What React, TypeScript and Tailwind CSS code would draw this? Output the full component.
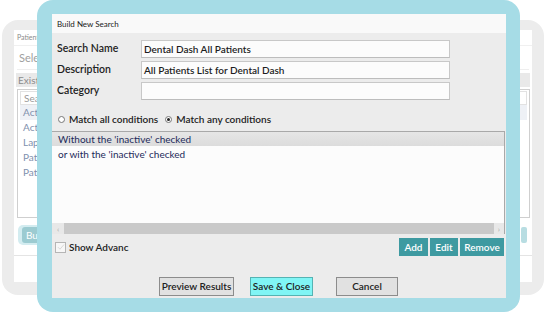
import React from "react";

const font = { fontFamily: "Lato, 'Open Sans', sans-serif" };

function BackgroundWindow() {
  return (
    <div className="pt-[20px] pl-[2px]">
      <div className="w-[542px] h-[275px] rounded-[16px] bg-[#ececec] pt-[10px] pl-[12px] pr-[12px]">
        <div className="h-[252px] bg-white flex flex-col">
          <div className="h-[16px] flex items-center pl-[3px] text-[7px] text-[#8a8a8a] border-b border-[#f0f0f0]">
            Patient Search
          </div>
          <div className="h-[22px] mt-[2px] mx-[3px] flex items-center pl-[2px] text-[11px] text-[#a0a0a0] border-b border-[#eeeeee]">
            Select a Search
          </div>
          <div className="mt-[3px] mx-[2px] h-[14px] bg-[#e9e9e9] flex items-center pl-[2px] text-[10px] text-[#8c8c8c]">
            Existing Searches
          </div>
          <div className="mt-[2px] mx-[3px] mr-[2px] h-[129px] border border-[#cfcfcf] flex flex-col px-[2px] pt-[1px]">
            <div className="h-[14px] border border-[#e2e2e2] flex items-center pl-[3px] text-[10px] text-[#9a9a9a]">
              Search
            </div>
            <div className="flex flex-col text-[10px] text-[#8090ad]">
              <div className="h-[15px] bg-[#eef1f6] flex items-center pl-[3px]">Active Patients</div>
              <div className="h-[15px] flex items-center pl-[3px]">Active Patients List</div>
              <div className="h-[15px] flex items-center pl-[3px]">Lapsed Patients</div>
              <div className="h-[15px] flex items-center pl-[3px]">Patients Due</div>
              <div className="h-[15px] flex items-center pl-[3px]">Patients Overdue</div>
            </div>
          </div>
          <div className="mt-[7px] flex items-center justify-between pl-[4px] pr-[5px]">
            <div className="h-[20px] px-[4px] rounded-[5px] bg-[#d3ecf0] flex items-center">
              <div className="h-[16px] px-[4px] rounded-[3px] bg-[#9ccbd1] text-white text-[10px] flex items-center">
                Build
              </div>
            </div>
            <div className="h-[16px] w-[6px] rounded-[2px] bg-[#b8dde2]" />
          </div>
          <div className="mt-[10px] border-t border-[#e4e4e4] flex-1" />
        </div>
      </div>
    </div>
  );
}

function Field({ label, value }: { label: string; value: string }) {
  return (
    <div className="flex items-center h-[18px]">
      <div className="w-[89px] pl-[5px] text-[10.5px] font-semibold text-[#222]">{label}</div>
      <div className="w-[309px] h-[18px] bg-[#fcfcfc] border border-[#c8c8c8] border-b-[#bdbdbd] flex items-center pl-[2px] text-[10px] text-[#1e1e1e] font-semibold">
        {value}
      </div>
    </div>
  );
}

function Dialog() {
  return (
    <div className="absolute left-[37px] top-0 w-[483px] h-[312px] rounded-[16px] bg-[#a6dce6] pt-[14px] pl-[15px] pr-[14px] pb-[14px]">
      <div className="w-full h-full bg-[#ececec] flex flex-col">
        <div className="h-[19px] bg-[#f9f9f9] flex items-center pl-[5px] text-[8px] text-[#222]">Build New Search</div>

        <div className="pt-[7px] flex flex-col gap-[3px]">
          <Field label="Search Name" value="Dental Dash All Patients" />
          <Field label="Description" value="All Patients List for Dental Dash" />
          <Field label="Category" value="" />
        </div>

        <div className="mt-[12px] h-[14px] flex items-center pl-[6px] text-[10px] font-semibold text-[#222]">
          <span className="w-[7px] h-[7px] rounded-full border border-[#777] bg-white mr-[4px]" />
          <span>Match all conditions</span>
          <span className="ml-[7px] w-[7px] h-[7px] rounded-full border border-[#777] bg-white mr-[4px] flex items-center justify-center">
            <span className="w-[3px] h-[3px] rounded-full bg-[#222]" />
          </span>
          <span>Match any conditions</span>
        </div>

        <div className="mt-[5px] h-[103px] mr-[1px] bg-[#fcfcfc] border-t border-t-[#a9a9a9] border-r border-r-[#a9a9a9] flex flex-col">
          <div className="h-[14px] bg-gradient-to-b from-[#e6e6e6] to-[#dcdcdc] flex items-center pl-[6px] text-[10px] text-[#1d2a5a]">
            Without the 'inactive' checked
          </div>
          <div className="h-[16px] flex items-center pl-[6px] text-[10px] text-[#1d2a5a]">
            or with the 'inactive' checked
          </div>
          <div className="flex-1" />
          <div className="h-[11px] flex items-center bg-[#e8e8e8]">
            <div className="w-[12px] flex justify-center text-[8px] text-[#aaa] leading-none">‹</div>
            <div className="flex-1 h-[11px] bg-[#c9c9c9]" />
            <div className="w-[10px] flex justify-center text-[8px] text-[#aaa] leading-none">›</div>
          </div>
        </div>

        <div className="mt-[4px] flex items-center justify-between pl-[3px] pr-[2px]">
          <div className="flex items-center">
            <div className="w-[11px] h-[11px] border border-[#b5b5b5] bg-[#f7f7f7] flex items-center justify-center">
              <svg width="8" height="8" viewBox="0 0 8 8">
                <path d="M1 4.2 L3 6.2 L7 1.5" fill="none" stroke="#d8d8d8" strokeWidth="1" />
              </svg>
            </div>
            <span className="ml-[3px] whitespace-nowrap text-[10px] font-semibold text-[#222]">
              Show Advanc
            </span>
          </div>
          <div className="flex gap-[2px] text-[10px] font-semibold text-white">
            <div className="w-[29px] h-[18px] bg-[#3e9aa1] flex items-center justify-center">Add</div>
            <div className="w-[28px] h-[18px] bg-[#3e9aa1] flex items-center justify-center">Edit</div>
            <div className="w-[44px] h-[18px] bg-[#3e9aa1] flex items-center justify-center">Remove</div>
          </div>
        </div>

        <div className="mt-[21px] flex items-center pl-[107px] text-[10px] font-semibold text-[#222]">
          <div className="w-[75px] h-[19px] bg-[#e1e1e1] border border-[#8c8c8c] flex items-center justify-center">
            Preview Results
          </div>
          <div className="ml-[16px] w-[63px] h-[19px] bg-[#80f5f5] border border-[#55b3b3] flex items-center justify-center">
            Save &amp; Close
          </div>
          <div className="ml-[23px] w-[62px] h-[19px] bg-[#e1e1e1] border border-[#8c8c8c] flex items-center justify-center">
            Cancel
          </div>
        </div>
      </div>
    </div>
  );
}

export default function App() {
  return (
    <div className="relative w-[546px] h-[314px] bg-white overflow-hidden" style={font}>
      <BackgroundWindow />
      <Dialog />
    </div>
  );
}
